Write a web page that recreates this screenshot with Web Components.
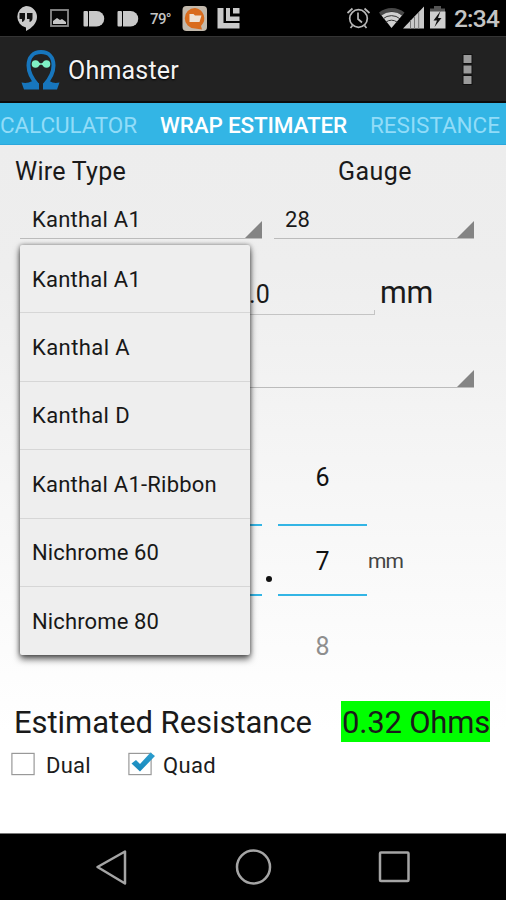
<!DOCTYPE html>
<html lang="en">
<head>
<meta charset="utf-8">
<title>Ohmaster</title>
<style>
html,body{margin:0;height:100%}
body{font-family:Roboto,"Liberation Sans",sans-serif;background:#000;overflow:hidden}
</style>
</head>
<body>
<ohm-app></ohm-app>
<script>
const define = (name, html, setup) => {
  const t = document.createElement('template');
  t.innerHTML = html;
  customElements.define(name, class extends HTMLElement {
    connectedCallback() {
      if (!this.shadowRoot) this.attachShadow({mode: 'open'}).append(t.content.cloneNode(true));
      if (setup) setup(this, this.shadowRoot);
    }
  });
};

/* Single line of text tracked out to a given width. */
define('fit-text', `<style>:host{display:block;white-space:nowrap;line-height:1.2;flex:none}span{display:inline-block}</style><span><slot></slot></span>`,
  (el, root) => {
    el.style.fontSize = el.getAttribute('size') + 'px';
    const w = +el.getAttribute('width'), s = root.querySelector('span');
    if (w) {
      const n = el.textContent.length;
      s.style.letterSpacing = ((w - s.getBoundingClientRect().width) / n).toFixed(3) + 'px';
      el.style.width = w + 'px';
    }
  });

define('status-bar', `<style>
:host{display:flex;height:36px;background:#000;color:#c4c4c4;box-sizing:border-box}
svg{display:block;flex:none}
.t{display:flex;align-items:center;width:30px;padding:2px 0 0;font-weight:500}
.c{display:flex;align-items:center;width:52px;padding-top:2px;font-weight:500}
</style>
<svg width="150" height="36" viewBox="0 0 150 36">
<path d="M26 6a11 11 0 0 0 0 21.500V31c6-3 11-8 11-14A11 11 0 0 0 26 6z" fill="#c9c9c9"/>
<path d="M19.500 13h5.500v5c0 2-1 3.500-3 4v-3h-2.500zM27 13h5.500v5c0 2-1 3.500-3 4v-3H27z" fill="#111"/>
<rect x="51" y="10" width="17" height="16" fill="#080808" stroke="#8d8d8d" stroke-width="1.800"/>
<path d="M53 24v-3l4-3 3 2 2-1 4 3v2z" fill="#c6c6c6"/>
<g fill="#c9c9c9"><rect x="83.500" y="11" width="4.500" height="15.500" rx="1"/><path d="M89 11h7.500a7.700 7.700 0 0 1 0 15.500H89z"/>
<rect x="117.500" y="11" width="4.500" height="15.500" rx="1"/><path d="M123 11h7.500a7.700 7.700 0 0 1 0 15.500H123z"/></g>
</svg>
<div class="t"><fit-text size="15" width="21">79°</fit-text></div>
<svg width="64" height="36" viewBox="180 0 64 36">
<rect x="182.500" y="6" width="24.500" height="25" rx="4" fill="#c3b9ac"/>
<path d="M195 8a10 10 0 1 0 0 20.500l7 1-1-3.500A10.500 10.500 0 0 0 195 8z" fill="#d96c1d"/>
<path d="M189.500 14h4l1.500 1.500h6.500l-2 6.500h-10z" fill="#eee3d5"/>
<g fill="#c9c9c9"><path d="M217.500 8h6v15h16v5.500h-22zM226 8h4v8.500h9.500v4.500H226zM233 8h6.500v5.500H233z"/></g>
</svg>
<svg width="210" height="36" viewBox="244 0 210 36">
<g fill="none" stroke="#b8b8b8" stroke-width="1.700"><circle cx="358.500" cy="18.500" r="8.800"/><path d="M358 12.500v6.500l4 3.500M347.500 13l5-4.500M364.500 8.500l5 4.500M352.500 25.500l-2 2.500M364.500 25.500l2 2.500"/></g>
<path d="M379 12.500a20 20 0 0 1 25.500 0l-2.300 3.200a16 16 0 0 0-21 0z" fill="#484848"/>
<path d="M381.500 15.500a17 17 0 0 1 20.500 0L391.500 28z" fill="#d0d0d0"/>
<path d="M383 18.800a13 13 0 0 1 17 0M385.700 22.300a9 9 0 0 1 11.600 0" fill="none" stroke="#333" stroke-width="1"/>
<path d="M403 28.500L424 6.500v22z" fill="#c9c9c9"/>
<path d="M410.500 20v9M414.500 16v13M418.700 12v17" stroke="#777" stroke-width="1"/>
<path d="M430 12.500v-4h4V6h7v2.500h4v4z" fill="#555"/>
<path d="M430 11.500h15.500v17H430z" fill="#cfcfcf"/><path d="M440.500 11l-7 9.500h3.500l-2.500 6.500 7-9h-3.500z" fill="#111"/>
</svg>
<div class="c"><fit-text size="24.500" width="45">2:34</fit-text></div>`);

define('action-bar', `<style>
:host{display:flex;height:67px;background:#222;box-sizing:border-box;border-top:1px solid #343434;border-bottom:2px solid #0c0c0c;align-items:center;color:#f4f4f4;padding-left:20px}
svg{display:block;flex:none}.sp{flex:1}
fit-text{margin:4px 0 0 7px;text-shadow:0 1px 2px #000}
</style>
<svg width="41" height="42" viewBox="0 0 41 42">
<path d="M17.500 37C12 31 8.500 24 8.500 17.500 8.500 9 13.500 4 21 4S33.500 9 33.500 17.500C33.500 24 30 31 24.500 37" fill="none" stroke="#1776bd" stroke-width="4"/>
<path d="M1.500 34.500c4 1 7 .5 11-1.500l6.500 2.500v6H4zM39.500 34.500c-4 1-7 .5-10-1.500L23 35.500v6h14z" fill="#1776bd"/>
<circle cx="15.500" cy="16" r="3.800" fill="#7ff0c4"/><circle cx="26.500" cy="16" r="3.800" fill="#7ff0c4"/><path d="M17 13.500l4 2 4-2v5l-4-2-4 2z" fill="#7ff0c4"/>
</svg>
<fit-text size="25" width="111">Ohmaster</fit-text><div class="sp"></div>
<svg width="50" height="40" viewBox="0 0 50 40"><g fill="#9b9b9b" stroke="#111" stroke-width="1"><rect x="7" y="5.500" width="9" height="9"/><rect x="7" y="16" width="9" height="9"/><rect x="7" y="26.500" width="9" height="9"/></g></svg>`);

define('tab-strip', `<style>
:host{display:flex;height:42px;background:#33b5e5;align-items:center;box-sizing:border-box;padding:4px 0 0 0;color:#91dcf8;border-bottom:1px solid #2ba7dc}
fit-text+fit-text{margin-left:23px}
.on{color:#fff;font-weight:500}
</style>
<fit-text size="22.500" width="137">CALCULATOR</fit-text><fit-text class="on" size="22.500" width="187">WRAP ESTIMATER</fit-text><fit-text size="22.500" width="130">RESISTANCE</fit-text>`);

define('spin-box', `<style>
:host{display:flex;height:40px;box-sizing:border-box;border-bottom:1px solid #bbb;align-items:center;padding-left:12px}
svg{display:block;align-self:flex-end;margin-left:auto}
::slotted(*){margin-top:9px}
</style><slot></slot><svg width="17" height="17"><path d="M17 0v17H0z" fill="#848484"/></svg>`);

define('number-wheel', `<style>
:host{display:grid;grid-template-rows:73px 73px 73px;width:89px;color:#111}
div{display:grid;place-items:center;box-sizing:border-box}
.m{border-top:2.500px solid #33b5e5;border-bottom:2.500px solid #33b5e5;height:72px;padding-top:4px}
.p{align-items:start;padding-top:12px}.n{color:#8e8e8e;align-items:end;padding-bottom:8px}
</style><div class="p"><slot name="prev"></slot></div><div class="m"><slot></slot></div><div class="n"><slot name="next"></slot></div>`);

define('check-box', `<style>
:host{display:flex;align-items:center;gap:8px;color:#1c1c1c}svg{display:block;overflow:visible}
.v{display:none}:host([checked]) .v{display:block}
</style><svg width="27" height="27" viewBox="0 0 27 27"><defs><linearGradient id="g" x2="0" y2="1"><stop stop-color="#2d9fd0"/><stop offset="1" stop-color="#1687ba"/></linearGradient></defs><rect x=".9" y="2.400" width="22.200" height="21.200" fill="#fff" stroke="#999" stroke-width="1.200"/><path class="v" d="M3.500 12.500l4.500-3.500 4 4L22.500 1.500l4.500 3.500L12 20.500z" fill="url(#g)"/></svg><slot></slot>`);

define('drop-menu', `<style>
:host{display:block;width:230px;box-sizing:border-box;background:#eee;border-radius:2px;box-shadow:0 4px 7px rgba(0,0,0,.65),0 0 4px rgba(0,0,0,.4);color:#181818}
::slotted(*){display:flex;align-items:center;box-sizing:border-box;height:68.400px;padding:2px 0 0 12px;border-bottom:1px solid #d6d6d6}
::slotted(:last-child){border-bottom:0}
</style><slot></slot>`);

define('nav-bar', `<style>:host{display:flex;height:67px;background:#000;justify-content:space-between;align-items:center;padding:0 93px;box-sizing:border-box;border-top:1px solid #777}svg{display:block}
svg *{fill:none;stroke:#a5a5a5;stroke-width:2.500;stroke-linejoin:round}</style>
<svg width="38" height="40"><path d="M4.500 20L32 4.500v32z"/></svg>
<svg width="38" height="40"><circle cx="19.500" cy="20" r="16.500"/></svg>
<svg width="38" height="40"><rect x="5" y="5.500" width="28.500" height="28.500" rx="1"/></svg>`);

define('ohm-app', `<style>
:host{display:flex;flex-direction:column;width:506px;height:900px;background:#fff}
main{flex:1;min-height:0;position:relative;background:linear-gradient(#ededed 0,#eee 18%,#fff 85%);color:#1a1a1a;display:flex;flex-direction:column}
.row{display:flex;box-sizing:border-box;flex:none}
.heads{height:49px;align-items:center;padding:4px 0 0 15px}
.heads>:last-child{margin-left:212px}
.spins{gap:12px;padding-left:20px}
.spins>:first-child{width:242px}.spins>:last-child{width:200px}
.edit{height:109px;padding-left:20px;padding-top:36px;align-items:flex-start;gap:5px}
.field{box-sizing:border-box;width:355px;height:40px;border-bottom:1px solid #c4c4c4;padding:5px 0 0 229px;display:flex;justify-content:space-between;align-items:flex-start}
.field i{align-self:flex-end;width:1px;height:4px;background:#c4c4c4}
.wheels{height:230px;padding:63px 0 0 173px}
.wheels>*{flex:none}
.dot{width:16px;padding:125px 0 0 4px;box-sizing:border-box}
.dot i{display:block;width:6px;height:6px;border-radius:50%;background:#111}
.unit{padding-top:98px;margin-left:1px;color:#444}
.result{height:50px;padding-left:14px;gap:29px;align-items:center}
.green{background:#0f0;height:41px;display:flex;align-items:center;padding:3px 0 0 1px;width:149px;box-sizing:border-box;margin-top:-3px}
.checks{padding-left:11px;height:34px;gap:37px;align-items:center}
.checks fit-text{margin-top:2px}
drop-menu{position:absolute;left:20px;top:100px}
</style>
<status-bar></status-bar><action-bar></action-bar><tab-strip></tab-strip>
<main>
<div class="row heads"><fit-text size="25" width="111">Wire Type</fit-text><fit-text size="25" width="74">Gauge</fit-text></div>
<div class="row spins" style="height:45px"><spin-box style="height:45px"><fit-text size="22" width="109">Kanthal A1</fit-text></spin-box><spin-box style="height:45px;padding-left:11px"><fit-text size="22" width="25">28</fit-text></spin-box></div>
<div class="row edit"><div class="field"><fit-text size="25" width="21">.0</fit-text><i></i></div><fit-text size="30.500" width="53">mm</fit-text></div>
<div class="row" style="padding-left:20px"><spin-box style="width:454px"></spin-box></div>
<div class="row wheels"><number-wheel></number-wheel><div class="dot"><i></i></div>
<number-wheel><fit-text slot="prev" size="25">6</fit-text><fit-text size="25">7</fit-text><fit-text slot="next" size="25">8</fit-text></number-wheel><div class="unit"><fit-text size="21" width="35">mm</fit-text></div></div>
<div style="flex:none;height:80px"></div>
<div class="row result"><fit-text size="31" width="298">Estimated Resistance</fit-text><div class="green"><fit-text size="31" width="148">0.32 Ohms</fit-text></div></div>
<div class="row checks"><check-box><fit-text size="22" width="45">Dual</fit-text></check-box><check-box checked><fit-text size="22" width="53">Quad</fit-text></check-box></div>
<drop-menu>
<div><fit-text size="22" width="109">Kanthal A1</fit-text></div>
<div><fit-text size="22" width="98">Kanthal A</fit-text></div>
<div><fit-text size="22" width="98">Kanthal D</fit-text></div>
<div><fit-text size="22" width="185">Kanthal A1-Ribbon</fit-text></div>
<div><fit-text size="22" width="127">Nichrome 60</fit-text></div>
<div><fit-text size="22" width="127">Nichrome 80</fit-text></div>
</drop-menu>
</main>
<nav-bar></nav-bar>`);
</script>
</body>
</html>
